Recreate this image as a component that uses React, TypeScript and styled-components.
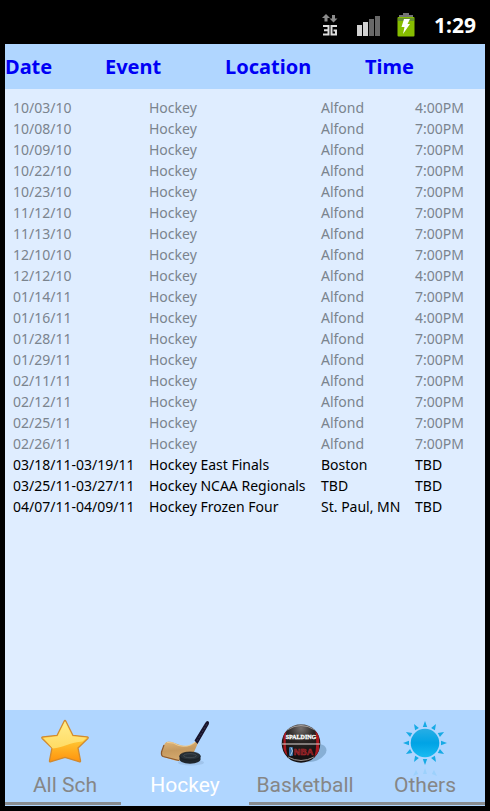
import React, { useState } from "react";
import styled, { createGlobalStyle } from "styled-components";

const GlobalStyle = createGlobalStyle`
  * { box-sizing: border-box; }
  body {
    margin: 0;
    background: #000;
    font-family: "Noto Sans", "Open Sans", sans-serif;
  }
`;

const Screen = styled.div`
  display: flex;
  flex-direction: column;
  min-height: 100vh;
  padding: 0 5px 5px;
  background: #000;
`;

const StatusBar = styled.header`
  display: flex;
  align-items: center;
  justify-content: flex-end;
  height: 44px;
  padding: 6px 9px 0 0;
  color: #fff;
`;

const StatusIcon = styled.svg<{ $gap: number }>`
  display: block;
  flex: none;
  margin-right: ${(p) => p.$gap}px;
`;

const Clock = styled.time`
  font-size: 21px;
  line-height: 24px;
  font-weight: 700;
`;

const Content = styled.main`
  flex: 1;
  background: #dfedff;
`;

const Schedule = styled.table`
  display: block;
  width: 100%;
`;

const ScheduleHead = styled.thead`
  display: block;
  height: 45px;
  background: #b0d6ff;
`;

const HeadRow = styled.tr`
  display: grid;
  grid-template-columns: 5fr 6fr 7fr 6fr;
`;

const HeadCell = styled.th`
  padding: 0;
  color: #0000f5;
  font-size: 20px;
  line-height: 45px;
  font-weight: 700;
  text-align: left;
`;

const ScheduleBody = styled.tbody`
  display: block;
  padding: 8px 0 8px 8px;
`;

const GameRow = styled.tr<{ $past: boolean }>`
  display: grid;
  grid-template-columns: 136px 172px 94px 1fr;
  color: ${(p) => (p.$past ? "#7b848e" : "#000")};
`;

const GameCell = styled.td`
  padding: 0;
  font-size: 14px;
  line-height: 21px;
  white-space: nowrap;
`;

const TabBar = styled.nav`
  display: grid;
  grid-template-columns: repeat(4, 1fr);
  height: 96px;
  background: #b0d6ff;
`;

const Tab = styled.button<{ $active: boolean }>`
  position: relative;
  display: flex;
  flex-direction: column;
  align-items: center;
  min-width: 0;
  padding: 8px 0 0;
  border: 0;
  background: none;
  color: ${(p) => (p.$active ? "#fff" : "#868686")};
  font-family: Roboto, "Noto Sans", sans-serif;
  font-size: 21px;
  line-height: 28px;
  cursor: pointer;

  &::after {
    content: "";
    position: absolute;
    bottom: 1px;
    left: 0;
    right: 0;
    height: 3px;
    background: ${(p) => (p.$active ? "#b0d6ff" : "#8a8d90")};
  }

  &[aria-current="page"]::after {
    left: -4px;
    right: -4px;
    z-index: 1;
  }
`;

const TabIcon = styled.svg`
  display: block;
  flex: none;
  overflow: visible;
  margin-bottom: 3px;
`;

const StarIcon = () => (
  <TabIcon width="50" height="50" viewBox="0 0 50 50" aria-hidden="true">
    <defs>
      <linearGradient id="star" x1="0" y1="0" x2="0" y2="1">
        <stop offset="0" stopColor="#ffe36b" />
        <stop offset="0.5" stopColor="#ffc431" />
        <stop offset="1" stopColor="#ff920c" />
      </linearGradient>
      <linearGradient id="starShine" x1="0" y1="0" x2="0" y2="1">
        <stop offset="0" stopColor="#ffec8c" />
        <stop offset="1" stopColor="#ffdb63" />
      </linearGradient>
    </defs>
    <path d="M24 3.500q1-2 2 0l7 14 14 1.300q2 .3.800 1.800L38 30l2.500 12.500q.3 2-1.500 1.200L25 39.500 11 43.700q-1.800.8-1.500-1.200L12 30 2.200 20.600q-1.200-1.500.8-1.800l14-1.300z" fill="url(#star)" stroke="#d08a31" strokeWidth="1.300" />
    <path d="M25 3.800l7.300 14.500 14.200 1.500-4 3.700C31 24 22 30 12.700 30.500L3.500 20l14.200-1.700z" fill="url(#starShine)" />
  </TabIcon>
);

const HockeyIcon = () => (
  <TabIcon width="50" height="50" viewBox="0 0 50 50" aria-hidden="true">
    <defs>
      <linearGradient id="blade" x1="0" y1="0" x2="0.2" y2="1">
        <stop offset="0" stopColor="#dfb67a" />
        <stop offset="0.5" stopColor="#c59a60" />
        <stop offset="1" stopColor="#d5a96d" />
      </linearGradient>
    </defs>
    <ellipse cx="31" cy="44.500" rx="13" ry="3" fill="#6e91b4" opacity="0.25" />
    <path d="M1.500 34l3-8q1-2.500 4-2.500c6 0 10 4.500 17 4.500 4 0 7-2 10.500-4.500l2 1.500-4 9-8 6q-4 4-11 2.500L3.500 39q-2.500-1-2-5z" fill="url(#blade)" />
    <path d="M4 27l-2.500 7q-.5 3.500 1.500 4.500l16 4" fill="none" stroke="#8a572d" strokeWidth="1.200" />
    <path d="M7 24.300q7 0 11 3 10 3 17-3" fill="none" stroke="#efd19a" strokeWidth="0.900" />
    <path d="M34.500 22.500L45.200 5q1.800-3 3.400-1.500 1 1 .1 3L37.500 26z" fill="#17142c" />
    <path d="M37 23L47.500 5" stroke="#403c56" strokeWidth="0.800" strokeDasharray="2 1.500" />
    <path d="M19.500 38v3.500c1 5.500 20 5.500 21 0V38z" fill="#1e252c" />
    <ellipse cx="30" cy="38" rx="10.300" ry="4" fill="#272f36" stroke="#151b20" strokeWidth="0.700" />
    <ellipse cx="30" cy="37.700" rx="6.500" ry="2" fill="none" stroke="#4b545a" strokeWidth="0.700" />
  </TabIcon>
);

const BasketballIcon = () => (
  <TabIcon width="50" height="50" viewBox="0 0 50 50" aria-hidden="true">
    <defs>
      <radialGradient id="ball" cx="0.5" cy="0.1" r="0.7">
        <stop offset="0" stopColor="#77716f" />
        <stop offset="0.5" stopColor="#292423" />
        <stop offset="1" stopColor="#151112" />
      </radialGradient>
      <clipPath id="ballClip"><circle cx="21" cy="25.500" r="19.200" /></clipPath>
    </defs>
    <ellipse cx="34" cy="35" rx="13" ry="8" transform="rotate(-22 34 35)" fill="#7299be" opacity="0.65" />
    <circle cx="21" cy="25.500" r="19.300" fill="url(#ball)" />
    <g clipPath="url(#ballClip)">
      <path d="M3.500 16q1-3 3-5-2 15 1 27-3-3-4-7zM35 10q3 2 4 6v18q-2 5-5 7 4-15 1-31z" fill="#a81820" />
      <path d="M7 12q14-9 28 0M8 39q13 7 26 0" fill="none" stroke="#aaa5a1" strokeWidth="0.900" />
      <path d="M1 26h40" fill="none" stroke="#ded8d5" strokeWidth="1.100" />
      <rect x="9" y="29" width="4" height="9" rx="1" fill="#3370a8" />
      <path d="M11 29.500l1.500 3.500-2 4.500" fill="none" stroke="#dce2e8" strokeWidth="0.800" />
    </g>
    <text x="21" y="20.500" textAnchor="middle" fontFamily="Liberation Serif, serif" fontSize="6" fontWeight="700" fill="#fff" stroke="#fff" strokeWidth="0.300">SPALDING</text>
    <text x="23.500" y="37" textAnchor="middle" fontFamily="Liberation Sans, sans-serif" fontSize="9" fontWeight="700" fill="#621d20" stroke="#b7272e" strokeWidth="0.500">NBA</text>
  </TabIcon>
);

const rayAngles = [0, 30, 60, 90, 120, 150, 180, 210, 240, 270, 300, 330];

const SunIcon = () => (
  <TabIcon width="50" height="50" viewBox="0 0 50 50" aria-hidden="true">
    <defs>
      <linearGradient id="sun" x1="0" y1="0" x2="0" y2="1">
        <stop offset="0" stopColor="#28aee5" />
        <stop offset="0.5" stopColor="#00a3e5" />
        <stop offset="1" stopColor="#18bbf2" />
      </linearGradient>
    </defs>
    {rayAngles.map((angle) => (
      <path key={angle} d="M25 3l2.200 6h-4.400z" transform={`rotate(${angle} 25 25)`} fill="#16aae5" />
    ))}
    <circle cx="25" cy="25" r="14.300" fill="url(#sun)" />
    <path d="M25 50l2 6h-4zM16 52l2 4-5 2zM34 52l-2 4 5 2z" fill="#78c8f5" opacity="0.35" />
  </TabIcon>
);

const games = [
  ...[
    ["10/03/10", "4:00PM"], ["10/08/10", "7:00PM"], ["10/09/10", "7:00PM"],
    ["10/22/10", "7:00PM"], ["10/23/10", "7:00PM"], ["11/12/10", "7:00PM"],
    ["11/13/10", "7:00PM"], ["12/10/10", "7:00PM"], ["12/12/10", "4:00PM"],
    ["01/14/11", "7:00PM"], ["01/16/11", "4:00PM"], ["01/28/11", "7:00PM"],
    ["01/29/11", "7:00PM"], ["02/11/11", "7:00PM"], ["02/12/11", "7:00PM"],
    ["02/25/11", "7:00PM"], ["02/26/11", "7:00PM"],
  ].map(([date, time]) => ({ date, event: "Hockey", location: "Alfond", time, past: true })),
  { date: "03/18/11-03/19/11", event: "Hockey East Finals", location: "Boston", time: "TBD", past: false },
  { date: "03/25/11-03/27/11", event: "Hockey NCAA Regionals", location: "TBD", time: "TBD", past: false },
  { date: "04/07/11-04/09/11", event: "Hockey Frozen Four", location: "St. Paul, MN", time: "TBD", past: false },
];

const tabs = [
  { label: "All Sch", Icon: StarIcon },
  { label: "Hockey", Icon: HockeyIcon },
  { label: "Basketball", Icon: BasketballIcon },
  { label: "Others", Icon: SunIcon },
];

export default function App() {
  const [active, setActive] = useState("Hockey");
  return (
    <>
      <GlobalStyle />
      <Screen>
        <StatusBar>
          <StatusIcon $gap={18} width="16" height="24" viewBox="0 0 16 24" role="img" aria-label="3G data">
            <path d="M4 1L0 5h2.500v3.500h3V5H8zM11.500 9.500l4-4H13V2h-3v3.500H7.500z" fill="#8b8b8b" />
            <path d="M1 13h5.500v8.500H1M2 17.200h4M15 13H9.500v8.500H14v-4h-2.500" fill="none" stroke="#dedede" strokeWidth="2" />
          </StatusIcon>
          <StatusIcon $gap={17} width="24" height="24" viewBox="0 0 24 24" role="img" aria-label="Signal strength">
            <path d="M1 12h5v11H1zM7 9h5v14H7z" fill="#d2d2d2" />
            <path d="M13 6h5v17h-5zM19 3h5v20h-5z" fill="#686868" />
          </StatusIcon>
          <StatusIcon $gap={19} width="18" height="24" viewBox="0 0 18 24" role="img" aria-label="Battery charging">
            <path d="M2 4V2h4V0h6v2h4v2z" fill="#747474" />
            <rect x="0.500" y="4" width="17" height="19.500" rx="1" fill="#86bd00" />
            <path d="M1 5h16v3H1z" fill="#65912c" />
            <path d="M7 6h6l-2.500 5H13l-7 10 1.500-7H4.500z" fill="#fff" />
          </StatusIcon>
          <Clock>1:29</Clock>
        </StatusBar>
        <Content>
          <Schedule>
            <ScheduleHead>
              <HeadRow>
                {["Date", "Event", "Location", "Time"].map((name) => (
                  <HeadCell key={name} scope="col">{name}</HeadCell>
                ))}
              </HeadRow>
            </ScheduleHead>
            <ScheduleBody>
              {games.map((game) => (
                <GameRow key={game.date} $past={game.past}>
                  <GameCell>{game.date}</GameCell>
                  <GameCell>{game.event}</GameCell>
                  <GameCell>{game.location}</GameCell>
                  <GameCell>{game.time}</GameCell>
                </GameRow>
              ))}
            </ScheduleBody>
          </Schedule>
        </Content>
        <TabBar aria-label="Schedules">
          {tabs.map(({ label, Icon }) => (
            <Tab
              key={label}
              type="button"
              $active={label === active}
              aria-current={label === active ? "page" : undefined}
              onClick={() => setActive(label)}
            >
              <Icon />
              {label}
            </Tab>
          ))}
        </TabBar>
      </Screen>
    </>
  );
}
